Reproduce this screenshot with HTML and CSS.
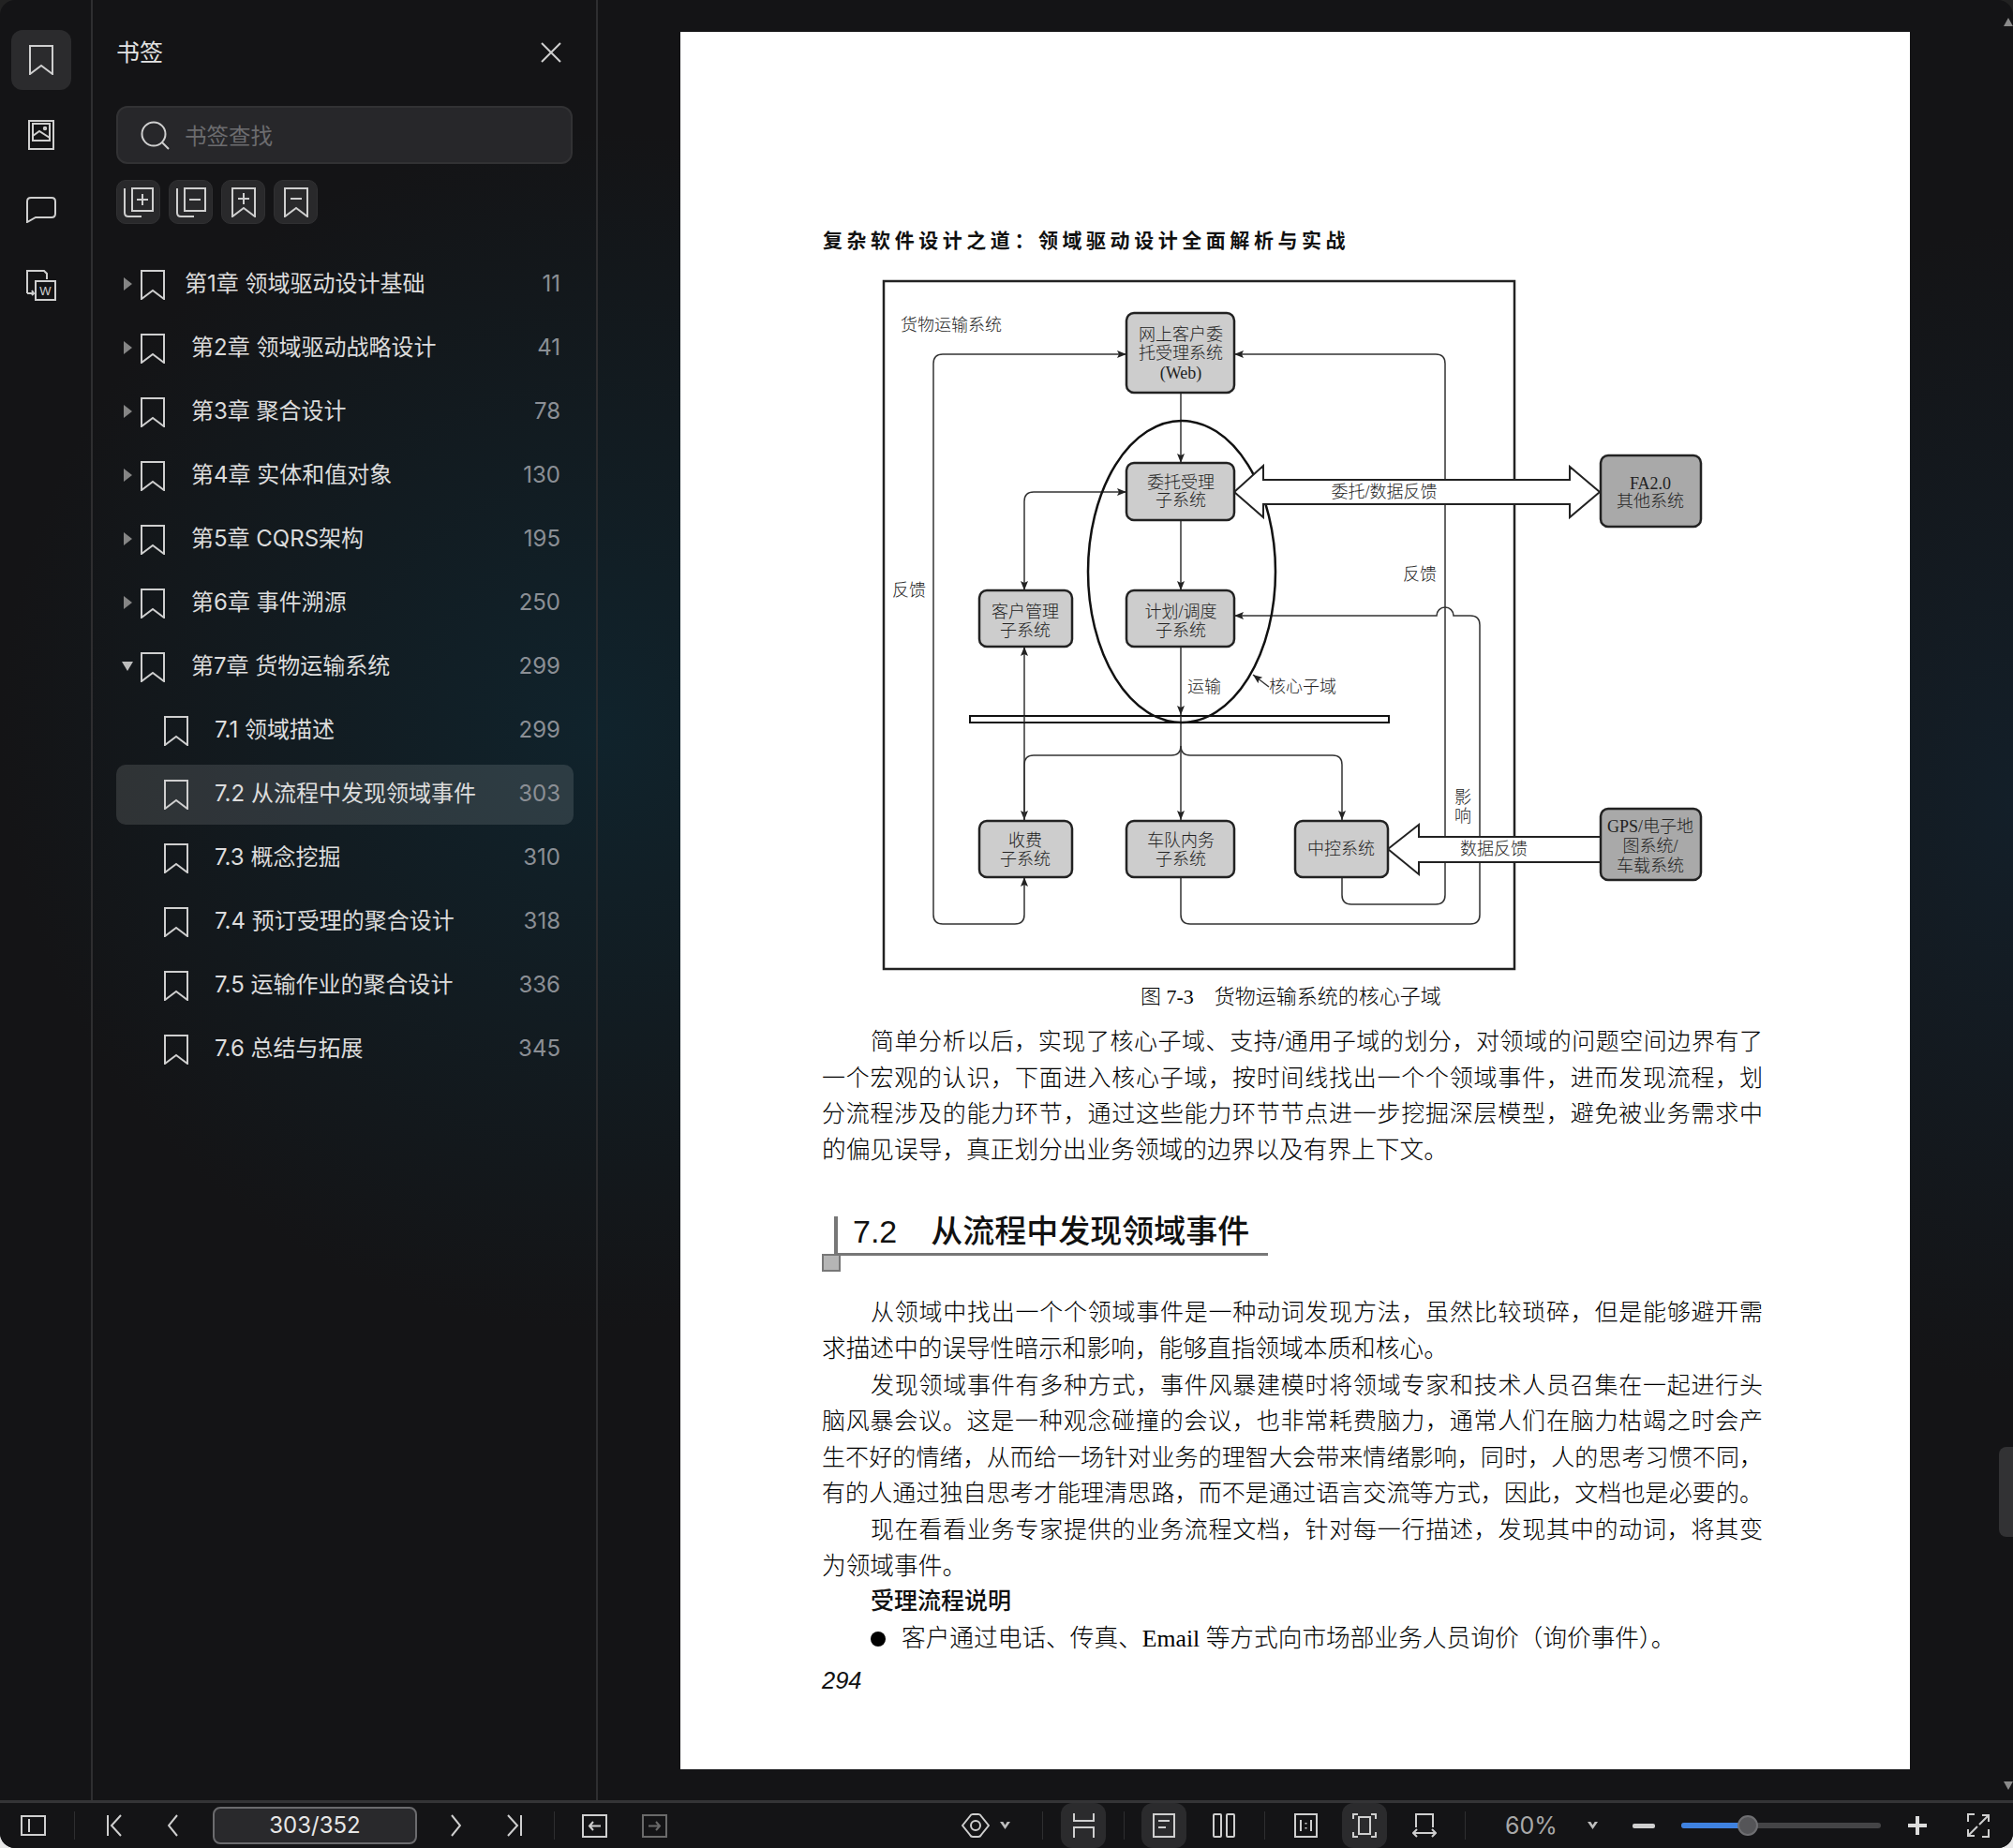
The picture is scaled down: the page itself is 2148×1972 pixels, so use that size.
FILE: index.html
```html
<!DOCTYPE html>
<html lang="zh-CN">
<head>
  <meta charset="UTF-8">
  <title>书签 - PDF Reader</title>
  <link rel="stylesheet" href="styles.css">
</head>
<body>
  <svg class="defs" width="0" height="0">
    <symbol id="bookmark" viewBox="0 0 26 32"><path d="M1 1H25V31L13 22L1 31Z"/></symbol>
    <marker id="head" viewBox="0 0 10 8" refX="10" refY="4" markerWidth="10" markerHeight="8" markerUnits="userSpaceOnUse" orient="auto-start-reverse"><path d="M0 0L10 4L0 8L2 4Z" fill="#222" stroke="none"/></marker>
  </svg>

  <div class="app">
    <div class="main">
      <nav class="rail">
        <div class="rail-item active"><svg class="ico ico-bm"><use href="#bookmark"/></svg></div>
        <div class="rail-item">
          <svg class="ico" width="28" height="32" viewBox="0 0 28 32"><rect x="1" y="1" width="26" height="30"/><rect x="5" y="4" width="18" height="18"/><path d="M5 17L12 12L23 19"/><circle cx="18" cy="9" r="1.2"/></svg>
        </div>
        <div class="rail-item">
          <svg class="ico" width="32" height="28" viewBox="0 0 32 28"><path d="M5 1H27Q31 1 31 5V18Q31 22 27 22H10L1 27V5Q1 1 5 1Z"/></svg>
        </div>
        <div class="rail-item">
          <svg class="ico" width="32" height="33" viewBox="0 0 32 33"><path d="M1 25V1H19L22 4V10"/><path d="M1 25H7M6 22L8 25L6 27"/><rect x="10" y="12" width="21" height="20"/><text class="ico-w" x="20.5" y="27">W</text></svg>
        </div>
      </nav>

      <aside class="panel">
        <div class="panel-head">
          <span class="panel-title">书签</span>
          <svg class="ico" width="22" height="22" viewBox="0 0 22 22"><path d="M1 1L21 21M21 1L1 21"/></svg>
        </div>
        <div class="search">
          <svg class="ico" width="31" height="31" viewBox="0 0 31 31"><circle cx="14" cy="14" r="12.5"/><path d="M23 23L30 30"/></svg>
          <span class="search-hint">书签查找</span>
        </div>
        <div class="tools">
          <button class="tool"><svg class="ico" width="32" height="32" viewBox="0 0 32 32"><rect x="9" y="1" width="22" height="24"/><path d="M1 1V27Q1 31 5 31H19M20 7V19M14 13H26"/></svg></button>
          <button class="tool"><svg class="ico" width="32" height="32" viewBox="0 0 32 32"><rect x="9" y="1" width="22" height="24"/><path d="M1 1V27Q1 31 5 31H19M14 13H26"/></svg></button>
          <button class="tool"><svg class="ico" width="26" height="32" viewBox="0 0 26 32"><path d="M1 1H25V31L13 22L1 31Z"/><path d="M13 6V18M7 12H19"/></svg></button>
          <button class="tool"><svg class="ico" width="26" height="32" viewBox="0 0 26 32"><path d="M1 1H25V31L13 22L1 31Z"/><path d="M7 12H19"/></svg></button>
        </div>

        <ul class="toc">
          <li class="row row-tight"><i class="caret"></i><svg class="ico ico-bm"><use href="#bookmark"/></svg><span class="row-text">第1章 领域驱动设计基础</span><span class="row-page">11</span></li>
          <li class="row"><i class="caret"></i><svg class="ico ico-bm"><use href="#bookmark"/></svg><span class="row-text">第2章 领域驱动战略设计</span><span class="row-page">41</span></li>
          <li class="row"><i class="caret"></i><svg class="ico ico-bm"><use href="#bookmark"/></svg><span class="row-text">第3章 聚合设计</span><span class="row-page">78</span></li>
          <li class="row"><i class="caret"></i><svg class="ico ico-bm"><use href="#bookmark"/></svg><span class="row-text">第4章 实体和值对象</span><span class="row-page">130</span></li>
          <li class="row"><i class="caret"></i><svg class="ico ico-bm"><use href="#bookmark"/></svg><span class="row-text">第5章 CQRS架构</span><span class="row-page">195</span></li>
          <li class="row"><i class="caret"></i><svg class="ico ico-bm"><use href="#bookmark"/></svg><span class="row-text">第6章 事件溯源</span><span class="row-page">250</span></li>
          <li class="row"><i class="caret open"></i><svg class="ico ico-bm"><use href="#bookmark"/></svg><span class="row-text">第7章 货物运输系统</span><span class="row-page">299</span></li>
          <li class="row row-sub"><svg class="ico ico-bm"><use href="#bookmark"/></svg><span class="row-text">7.1 领域描述</span><span class="row-page">299</span></li>
          <li class="row row-sub selected"><svg class="ico ico-bm"><use href="#bookmark"/></svg><span class="row-text">7.2 从流程中发现领域事件</span><span class="row-page">303</span></li>
          <li class="row row-sub"><svg class="ico ico-bm"><use href="#bookmark"/></svg><span class="row-text">7.3 概念挖掘</span><span class="row-page">310</span></li>
          <li class="row row-sub"><svg class="ico ico-bm"><use href="#bookmark"/></svg><span class="row-text">7.4 预订受理的聚合设计</span><span class="row-page">318</span></li>
          <li class="row row-sub"><svg class="ico ico-bm"><use href="#bookmark"/></svg><span class="row-text">7.5 运输作业的聚合设计</span><span class="row-page">336</span></li>
          <li class="row row-sub"><svg class="ico ico-bm"><use href="#bookmark"/></svg><span class="row-text">7.6 总结与拓展</span><span class="row-page">345</span></li>
        </ul>
      </aside>

      <section class="viewer">
        <article class="page">
          <div class="running-head">复杂软件设计之道：领域驱动设计全面解析与实战</div>

          <!-- figure: coordinates are page-space pixels -->
          <svg class="figure" width="1004" height="760" viewBox="877 290 1004 760">
            <rect class="frame" x="943" y="300" width="673" height="734"/>

            <g class="wire">
              <path marker-end="url(#head)" d="M1006 986H1083Q1093 986 1093 976V936"/>
              <path marker-end="url(#head)" d="M1006 986Q996 986 996 976V388Q996 378 1006 378H1202"/>
              <path marker-end="url(#head)" d="M1432 936V955Q1432 965 1442 965H1532Q1542 965 1542 955V388Q1542 378 1532 378H1317"/>
              <path marker-end="url(#head)" d="M1260 936V976Q1260 986 1270 986H1569Q1579 986 1579 976V667Q1579 657 1569 657H1551A9 9 0 0 0 1533 657H1317"/>
              <path marker-end="url(#head)" d="M1260 418V494"/>
              <path marker-end="url(#head)" d="M1260 555V630"/>
              <path marker-end="url(#head)" d="M1260 690V763"/>
              <path marker-end="url(#head)" d="M1260 771V875"/>
              <path marker-end="url(#head)" d="M1260 796Q1260 806 1250 806H1103Q1093 806 1093 816V875"/>
              <path marker-end="url(#head)" d="M1260 796Q1260 806 1270 806H1422Q1432 806 1432 816V875"/>
              <path marker-start="url(#head)" marker-end="url(#head)" d="M1093 630V535Q1093 525 1103 525H1202"/>
              <path marker-start="url(#head)" d="M1093 690V875"/>
              <path marker-end="url(#head)" d="M1354 733L1337 720"/>
            </g>

            <rect class="bar" x="1035" y="764" width="447" height="7"/>
            <path class="wire" d="M1093 764V771M1260 764V771"/>
            <ellipse class="oval" cx="1261" cy="610" rx="100" ry="161"/>

            <polygon class="fat" points="1317,525 1348,497 1348,512 1675,512 1675,498 1707,525 1675,552 1675,538 1348,538 1348,552"/>
            <polygon class="fat" points="1481,906 1514,880 1514,893 1708,893 1708,920 1514,920 1514,933"/>

            <rect class="box" x="1202" y="334" width="115" height="85" rx="8"/>
            <rect class="box" x="1202" y="494" width="115" height="61" rx="8"/>
            <rect class="box" x="1202" y="630" width="115" height="60" rx="8"/>
            <rect class="box" x="1045" y="630" width="99" height="60" rx="8"/>
            <rect class="box" x="1045" y="876" width="99" height="60" rx="8"/>
            <rect class="box" x="1202" y="876" width="115" height="60" rx="8"/>
            <rect class="box" x="1382" y="876" width="99" height="60" rx="8"/>
            <rect class="box box-dark" x="1708" y="486" width="107" height="76" rx="8"/>
            <rect class="box box-dark" x="1708" y="863" width="107" height="76" rx="8"/>

            <g class="fig-text">
              <text x="1260" y="357">网上客户委</text>
              <text x="1260" y="377">托受理系统</text>
              <text x="1260" y="398">(Web)</text>
              <text x="1260" y="515">委托受理</text>
              <text x="1260" y="534">子系统</text>
              <text x="1260" y="653">计划/调度</text>
              <text x="1260" y="673">子系统</text>
              <text x="1094" y="653">客户管理</text>
              <text x="1094" y="673">子系统</text>
              <text x="1094" y="897">收费</text>
              <text x="1094" y="917">子系统</text>
              <text x="1260" y="897">车队内务</text>
              <text x="1260" y="917">子系统</text>
              <text x="1431" y="906">中控系统</text>
              <text x="1761" y="516">FA2.0</text>
              <text x="1761" y="535">其他系统</text>
              <text x="1761" y="882">GPS/电子地</text>
              <text x="1761" y="903">图系统/</text>
              <text x="1761" y="924">车载系统</text>
              <text x="1015" y="347">货物运输系统</text>
              <text x="970" y="630">反馈</text>
              <text x="1515" y="613">反馈</text>
              <text x="1285" y="733">运输</text>
              <text x="1390" y="733">核心子域</text>
              <text x="1477" y="525">委托/数据反馈</text>
              <text x="1594" y="906">数据反馈</text>
              <text x="1561" y="851">影</text>
              <text x="1561" y="871">响</text>
            </g>
          </svg>

          <div class="caption">图 7-3&emsp;货物运输系统的核心子域</div>

          <div class="body-text first">
            <p class="line indent">简单分析以后，实现了核心子域、支持/通用子域的划分，对领域的问题空间边界有了</p>
            <p class="line">一个宏观的认识，下面进入核心子域，按时间线找出一个个领域事件，进而发现流程，划</p>
            <p class="line">分流程涉及的能力环节，通过这些能力环节节点进一步挖掘深层模型，避免被业务需求中</p>
            <p>的偏见误导，真正划分出业务领域的边界以及有界上下文。</p>
          </div>

          <h2 class="section-title"><span class="section-num">7.2</span>从流程中发现领域事件</h2>

          <div class="body-text">
            <p class="line indent">从领域中找出一个个领域事件是一种动词发现方法，虽然比较琐碎，但是能够避开需</p>
            <p>求描述中的误导性暗示和影响，能够直指领域本质和核心。</p>
            <p class="line indent">发现领域事件有多种方式，事件风暴建模时将领域专家和技术人员召集在一起进行头</p>
            <p class="line">脑风暴会议。这是一种观念碰撞的会议，也非常耗费脑力，通常人们在脑力枯竭之时会产</p>
            <p class="line">生不好的情绪，从而给一场针对业务的理智大会带来情绪影响，同时，人的思考习惯不同，</p>
            <p class="line">有的人通过独自思考才能理清思路，而不是通过语言交流等方式，因此，文档也是必要的。</p>
            <p class="line indent">现在看看业务专家提供的业务流程文档，针对每一行描述，发现其中的动词，将其变</p>
            <p>为领域事件。</p>
            <p class="indent strong">受理流程说明</p>
            <p class="indent bullet">客户通过电话、传真、Email 等方式向市场部业务人员询价（询价事件）。</p>
          </div>

          <div class="folio">294</div>
        </article>

        <i class="scroll-up"></i>
        <div class="scroll-thumb"></div>
        <i class="scroll-down"></i>
      </section>
    </div>

    <footer class="toolbar">
      <svg class="ico tb-sidebar" width="27" height="22" viewBox="0 0 27 22"><rect x="1" y="1" width="25" height="20"/><path d="M9 4V18"/></svg>
      <i class="sep sep-1"></i>
      <svg class="ico tb-first" width="16" height="24" viewBox="0 0 16 24"><path d="M1 1V23M15 1L5 12L15 23"/></svg>
      <svg class="ico tb-prev" width="11" height="24" viewBox="0 0 11 24"><path d="M10 1L1 12L10 23"/></svg>
      <div class="page-input">303/352</div>
      <svg class="ico tb-next" width="11" height="24" viewBox="0 0 11 24"><path d="M1 1L10 12L1 23"/></svg>
      <svg class="ico tb-last" width="16" height="24" viewBox="0 0 16 24"><path d="M15 1V23M1 1L11 12L1 23"/></svg>
      <i class="sep sep-2"></i>
      <svg class="ico tb-back" width="27" height="25" viewBox="0 0 27 25"><rect x="1" y="1" width="25" height="23"/><path d="M20 12.500H8M12 8L8 12.500L12 17"/></svg>
      <svg class="ico ico-dim tb-forward" width="27" height="25" viewBox="0 0 27 25"><rect x="1" y="1" width="25" height="23"/><path d="M7 12.500H19M15 8L19 12.500L15 17"/></svg>
      <svg class="ico tb-eye" width="30" height="26" viewBox="0 0 30 26"><path d="M1 13L9 3Q10 1 12 1H18Q20 1 21 3L29 13L21 23Q20 25 18 25H12Q10 25 9 23Z"/><circle cx="15" cy="13" r="5"/></svg>
      <i class="tb-caret tb-eye-caret"></i>
      <i class="sep sep-3"></i>
      <div class="tb-tile tile-1"><svg class="ico" width="23" height="26" viewBox="0 0 23 26"><path d="M1 0V8H22V0M1 26V15H22V26"/></svg></div>
      <i class="sep sep-4"></i>
      <div class="tb-tile tile-2"><svg class="ico" width="24" height="26" viewBox="0 0 24 26"><rect x="1" y="1" width="22" height="24"/><path d="M6 8H18M6 15H14"/></svg></div>
      <svg class="ico tb-cols" width="24" height="26" viewBox="0 0 24 26"><rect x="1" y="1" width="8" height="24" rx="1"/><rect x="15" y="1" width="8" height="24" rx="1"/></svg>
      <i class="sep sep-5"></i>
      <svg class="ico tb-actual" width="25" height="26" viewBox="0 0 25 26"><rect x="1" y="1" width="23" height="24"/><path d="M7 7V19M18 7V19M12.500 10V11.500M12.500 15V16.500"/></svg>
      <div class="tb-tile tile-3"><svg class="ico" width="26" height="26" viewBox="0 0 26 26"><rect x="7" y="4" width="12" height="18"/><path d="M1 6V1H6M20 1H25V6M1 20V25H6M20 25H25V20"/></svg></div>
      <svg class="ico tb-width" width="26" height="26" viewBox="0 0 26 26"><path d="M4 15V1H22V15M1 21H25M5 17L1 21L5 25M21 17L25 21L21 25"/></svg>
      <i class="sep sep-6"></i>
      <span class="zoom-val">60%</span>
      <i class="tb-caret tb-zoom-caret"></i>
      <i class="tb-minus"></i>
      <div class="slider"><div class="slider-fill"></div><div class="slider-thumb"></div></div>
      <i class="tb-plus"></i>
      <svg class="ico tb-full" width="26" height="26" viewBox="0 0 26 26"><path d="M9 1H2V9M17 25H24V17M14 12L24 2M24 9V2H17M12 14L2 24M2 17V24H9"/></svg>
    </footer>
  </div>
</body>
</html>
```

FILE: styles.css
```css
* {
  box-sizing: border-box;
}

html, body {
  margin: 0;
  height: 100%;
}

body {
  background: linear-gradient(to bottom, #222 0%, #222 50%, #e8e8e8 100%);
  font-family: Inter, "Noto Sans CJK SC", sans-serif;
  color: #ddd;
  overflow: hidden;
}

.defs {
  position: absolute;
}

.app {
  display: flex;
  flex-direction: column;
  height: 100vh;
  border-radius: 16px;
  overflow: hidden;
  background:
    radial-gradient(ellipse 640px 640px at 640px 780px, #10232c 0%, rgba(16, 35, 44, 0) 100%),
    radial-gradient(ellipse 360px 620px at 2148px 860px, #131f29 0%, rgba(19, 31, 41, 0) 100%),
    #141416;
}

.main {
  display: flex;
  height: 1921px;
}

/* icons */
.ico {
  display: block;
  flex: none;
  fill: none;
  stroke: #cfcfcf;
  stroke-width: 2;
}

.ico-bm {
  width: 26px;
  height: 32px;
}

.ico-dim {
  stroke: #6a6a6a;
}

.ico-w {
  fill: #cfcfcf;
  stroke: none;
  font: 13px "Liberation Sans", sans-serif;
  text-anchor: middle;
}

/* left rail */
.rail {
  flex: none;
  width: 99px;
  padding: 32px 0 0 12px;
  border-right: 2px solid #2e2e30;
  display: flex;
  flex-direction: column;
  gap: 16px;
}

.rail-item {
  width: 64px;
  height: 64px;
  border-radius: 12px;
  display: flex;
  align-items: center;
  justify-content: center;
}

.rail-item.active {
  background: #2b2b2d;
}

/* bookmark panel */
.panel {
  flex: none;
  width: 539px;
  padding-left: 25px;
  padding-right: 25px;
  border-right: 2px solid #2e2e30;
}

.panel-head {
  height: 113px;
  display: flex;
  align-items: center;
  justify-content: space-between;
  padding-right: 12px;
  padding-bottom: 2px;
}

.panel-title {
  padding-bottom: 4px;
  font-size: 25px;
  color: #e4e4e4;
}

.search {
  height: 62px;
  width: 487px;
  display: flex;
  align-items: center;
  padding-left: 24px;
  background: #27272a;
  border: 2px solid #323234;
  border-radius: 12px;
}

.search-hint {
  margin-left: 16px;
  font-size: 23.500px;
  color: #6c6c6f;
}

.tools {
  margin-top: 17px;
  display: flex;
  gap: 9px;
}

.tool {
  width: 47px;
  height: 47px;
  padding: 0;
  border: 1px solid #303032;
  border-radius: 10px;
  background: #29292b;
  display: flex;
  align-items: center;
  justify-content: center;
}

.toc {
  list-style: none;
  margin: 33px 0 0;
  padding: 0;
  width: 488px;
  display: flex;
  flex-direction: column;
  gap: 4px;
}

.row {
  height: 64px;
  display: flex;
  align-items: center;
  padding: 0 14px 0 8px;
  border-radius: 10px;
  font-size: 24px;
}

.row-sub {
  padding-left: 51px;
}

.row.selected {
  background: rgba(255, 255, 255, 0.12);
}

.caret {
  flex: none;
  width: 0;
  height: 0;
  margin-right: 9px;
  margin-bottom: 2px;
  border-style: solid;
  border-width: 7px 0 7px 9px;
  border-color: transparent transparent transparent #858585;
}

.caret.open {
  margin-left: -2px;
  margin-right: 8px;
  border-width: 10px 6px 0;
  border-color: #bcbcbc transparent transparent;
}

.row-text {
  margin-left: 28px;
  padding-bottom: 7px;
  color: #dcdcdc;
  white-space: nowrap;
}

.row-tight .row-text {
  margin-left: 21px;
}

.row-page {
  margin-left: auto;
  padding-bottom: 3px;
  color: #8b8f95;
}

/* document area */
.viewer {
  flex: 1;
  position: relative;
  padding: 34px 0 0 88px;
}

.page {
  width: 1312px;
  height: 1854px;
  padding: 208px 0 0 151px;
  background: #fff;
  color: #000;
  font-family: "Liberation Serif", "Noto Sans CJK SC", serif;
  font-weight: 300;
}

.running-head {
  height: 30px;
  line-height: 30px;
  margin-left: 1px;
  font-size: 21px;
  font-weight: 700;
  letter-spacing: 4.550px;
  color: #111;
  white-space: nowrap;
}

.figure {
  display: block;
  margin-top: 18px;
}

.frame {
  fill: none;
  stroke: #222;
  stroke-width: 2.500;
}

.wire {
  fill: none;
  stroke: #333;
  stroke-width: 1.500;
}

.oval {
  fill: none;
  stroke: #111;
  stroke-width: 2.500;
}

.bar {
  fill: #fff;
  stroke: #111;
  stroke-width: 2;
}

.fat {
  fill: #fff;
  stroke: #222;
  stroke-width: 2;
}

.box {
  fill: #cdcdcd;
  stroke: #222;
  stroke-width: 2.500;
}

.box-dark {
  fill: #a9a9a9;
}

.fig-text text {
  font-size: 18px;
  fill: #222;
  text-anchor: middle;
  dominant-baseline: central;
}

.caption {
  width: 1004px;
  height: 26px;
  margin-top: 1px;
  line-height: 26px;
  padding-left: 340px;
  font-size: 22px;
  white-space: nowrap;
}

.body-text p {
  margin: 0;
  width: 1004px;
  height: 38.600px;
  line-height: 38.600px;
  font-size: 25.700px;
  white-space: nowrap;
}

.body-text.first {
  margin-top: 16px;
}

/* full lines are set a little small, justify spreads them to the column */
.body-text .line {
  font-size: 25px;
  white-space: normal;
  text-align: justify;
  text-align-last: justify;
}

.body-text .indent {
  padding-left: 52px;
}

.body-text .strong {
  font-family: "Noto Sans CJK SC", sans-serif;
  font-weight: 500;
  font-size: 25px;
  line-height: 30.600px;
  color: #111;
}

.body-text .bullet {
  display: flex;
  align-items: center;
}

.bullet::before {
  content: "";
  flex: none;
  width: 16px;
  height: 16px;
  margin-right: 17px;
  border-radius: 50%;
  background: #000;
}

.section-title {
  position: relative;
  margin: 42px 0 42px 15px;
  width: 461px;
  height: 51px;
  padding-left: 18px;
  border-bottom: 3px solid #777;
  font-family: "Liberation Sans", "Noto Sans CJK SC", sans-serif;
  font-size: 34px;
  font-weight: 500;
  line-height: 50px;
  color: #111;
  white-space: nowrap;
}

.section-num {
  margin-right: 36px;
}

/* corner mark of the heading rule */
.section-title::before {
  content: "";
  position: absolute;
  left: -2px;
  top: 9px;
  width: 4px;
  height: 42px;
  background: #777;
}

.section-title::after {
  content: "";
  position: absolute;
  left: -15px;
  top: 49px;
  width: 16px;
  height: 15px;
  background: #b5b5b5;
  border: 2px solid #777;
}

.folio {
  margin-top: 8px;
  font-family: "Liberation Sans", sans-serif;
  font-size: 25.500px;
  font-style: italic;
  line-height: 34px;
  color: #111;
}

/* overlay scrollbar */
.scroll-up, .scroll-down {
  position: absolute;
  right: 0;
  width: 0;
  height: 0;
  border-style: solid;
}

.scroll-up {
  top: 19px;
  border-width: 0 5px 9px;
  border-color: transparent transparent #8a8a8a;
}

.scroll-down {
  top: 1901px;
  border-width: 9px 5px 0;
  border-color: #8a8a8a transparent transparent;
}

.scroll-thumb {
  position: absolute;
  right: 0;
  top: 1544px;
  width: 15px;
  height: 96px;
  border-radius: 8px 0 0 8px;
  background: #323234;
}

/* bottom toolbar: margins run left to right across the bar */
.toolbar {
  flex: 1;
  display: flex;
  align-items: center;
  padding-left: 22px;
  border-top: 3px solid #343436;
  background: #141416;
}

.sep {
  flex: none;
  width: 1px;
  height: 30px;
  background: #2e2e30;
}

.sep-1 { margin-left: 30px; }
.tb-first { margin-left: 34px; }
.tb-prev { margin-left: 49px; }
.page-input { margin-left: 37px; }
.tb-next { margin-left: 36px; }
.tb-last { margin-left: 49px; }
.sep-2 { margin-left: 34px; }
.tb-back { margin-left: 29px; }
.tb-forward { margin-left: 37px; }
.tb-eye { margin-left: 314px; }
.tb-eye-caret { margin-left: 11px; }
.sep-3 { margin-left: 34px; }
.tile-1 { margin-left: 19px; }
.sep-4 { margin-left: 19px; }
.tile-2 { margin-left: 18px; }
.tb-cols { margin-left: 28px; }
.sep-5 { margin-left: 31px; }
.tb-actual { margin-left: 31px; }
.tile-3 { margin-left: 26px; }
.tb-width { margin-left: 27px; }
.sep-6 { margin-left: 30px; }
.zoom-val { margin-left: 42px; }
.tb-zoom-caret { margin-left: 34px; }
.tb-minus { margin-left: 37px; }
.slider { margin-left: 28px; }
.tb-plus { margin-left: 29px; }
.tb-full { margin-left: 42px; }

.page-input {
  flex: none;
  width: 218px;
  height: 40px;
  line-height: 36px;
  text-align: center;
  font-size: 24px;
  color: #e6e6e6;
  background: #29292c;
  border: 2px solid #6b6b6e;
  border-radius: 8px;
}

.tb-tile {
  flex: none;
  width: 48px;
  height: 48px;
  border-radius: 12px;
  background: #2b2b2d;
  display: flex;
  align-items: center;
  justify-content: center;
}

.tb-caret {
  flex: none;
  width: 11px;
  height: 8px;
  background: #bdbdbd;
  clip-path: polygon(0 0, 30% 0, 50% 45%, 70% 0, 100% 0, 50% 100%);
}

.zoom-val {
  flex: none;
  width: 54px;
  font-size: 25px;
  color: #a8a8a8;
  white-space: nowrap;
}

.tb-minus {
  flex: none;
  width: 24px;
  height: 5px;
  border-radius: 2px;
  background: #cfcfcf;
}

.slider {
  position: relative;
  flex: none;
  width: 213px;
  height: 6px;
  border-radius: 3px;
  background: #444446;
}

.slider-fill {
  width: 62px;
  height: 6px;
  border-radius: 3px 0 0 3px;
  background: #3f82e0;
}

.slider-thumb {
  position: absolute;
  left: 60px;
  top: -8px;
  width: 22px;
  height: 22px;
  border-radius: 50%;
  background: #555558;
  border: 2px solid #6f6f72;
}

.tb-plus {
  position: relative;
  flex: none;
  width: 20px;
  height: 20px;
  background:
    linear-gradient(#dcdcdc, #dcdcdc) center / 20px 4px no-repeat,
    linear-gradient(#dcdcdc, #dcdcdc) center / 4px 20px no-repeat;
}
```
